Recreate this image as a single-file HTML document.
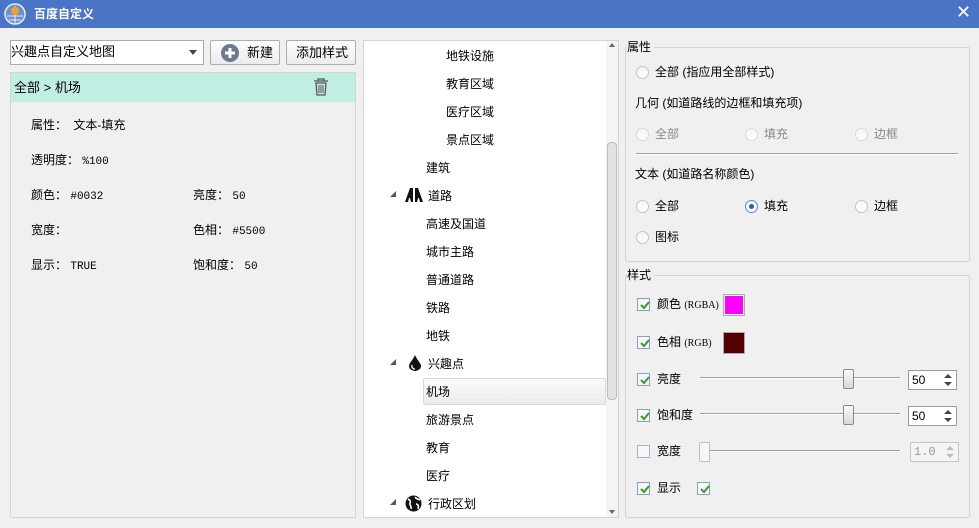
<!DOCTYPE html>
<html><head><meta charset="utf-8"><style>
*{margin:0;padding:0;box-sizing:border-box}
body{width:979px;height:528px;background:#f0f0f0;font-family:"Liberation Sans","Noto Sans CJK SC",sans-serif;font-size:12px;color:#000;position:relative;overflow:hidden}
.a{position:absolute;white-space:nowrap}
.t{line-height:16px}
.mono{font-family:"Liberation Mono","Noto Sans CJK SC",monospace;font-size:11px}
.rad{position:absolute;width:13px;height:13px;border-radius:50%;border:1px solid #c4c4c4;background:linear-gradient(#f4f4f4,#fff)}
.dis{color:#8a8a8a}
.cb{position:absolute;width:13px;height:13px;border:1px solid #8f9fb5;background:#f4f7fb}
.cb svg{position:absolute;left:1px;top:1px}
.grp{position:absolute;border:1px solid #d5d5d5;border-radius:2px}
.spin{position:absolute;width:49px;height:20px;border:1px solid #9a9a9a;background:#fff;font-size:12px;padding:2px 0 0 3px}
.track{position:absolute;height:2px;border-top:1px solid #a0a0a0;border-bottom:1px solid #fff}
.thumb{position:absolute;width:11px;height:20px;border:1px solid #8a8a8a;border-radius:2px;background:linear-gradient(#fafafa,#d8d8d8)}
</style></head><body>
<!-- title bar -->
<div class="a" style="left:0;top:0;width:979px;height:28px;background:#4a74c5"></div>
<svg class="a" style="left:4px;top:3px" width="22" height="22" viewBox="0 0 22 22"><circle cx="11" cy="11" r="10" fill="#6b8fd0" stroke="#e8eef8" stroke-width="1.5"/><path d="M3 13h16M5 17h12M11 3v17" stroke="#e8eef8" stroke-width="1"/><circle cx="11" cy="8" r="4" fill="#f4a21c"/></svg>
<div class="a t" style="left:34px;top:6px;color:#fff;font-size:12px;font-weight:bold">百度自定义</div>
<div class="a" style="left:956px;top:2px;color:#fff;font-size:18px">✕</div>
<!-- combo -->
<div class="a" style="left:10px;top:40px;width:194px;height:25px;background:#fff;border:1px solid #acacac"></div>
<div class="a t" style="left:11px;top:44px;font-size:13px">兴趣点自定义地图</div>
<div class="a" style="left:189px;top:50px;width:0;height:0;border-left:4px solid transparent;border-right:4px solid transparent;border-top:5px solid #444"></div>
<div class="a" style="left:210px;top:40px;width:70px;height:25px;background:linear-gradient(#fdfdfd,#ececec);border:1px solid #adadad;border-radius:2px"></div>
<svg class="a" style="left:220px;top:43px" width="20" height="20"><circle cx="10" cy="10" r="9" fill="#6e7a8e"/><path d="M10 5v10M5 10h10" stroke="#fff" stroke-width="3"/></svg>
<div class="a t" style="left:247px;top:45px;font-size:13px">新建</div>
<div class="a" style="left:286px;top:40px;width:70px;height:25px;background:linear-gradient(#fdfdfd,#ececec);border:1px solid #adadad;border-radius:2px"></div>
<div class="a t" style="left:296px;top:45px;font-size:13px">添加样式</div>
<!-- left panel -->
<div class="a" style="left:10px;top:72px;width:346px;height:446px;border:1px solid #d4d4d4;background:#f0f0f0"></div>
<div class="a" style="left:11px;top:73px;width:344px;height:29px;background:#c1eee2"></div>
<div class="a t" style="left:14px;top:80px;font-size:13px">全部 &gt; 机场</div>
<svg class="a" style="left:313px;top:78px" width="16" height="18" viewBox="0 0 16 18"><path d="M1 3h14M5 3V1h6v2M3 5h10l-1 12H4z" fill="none" stroke="#555" stroke-width="1.3"/><path d="M6 7v8M8 7v8M10 7v8" stroke="#555" stroke-width="1"/></svg>
<div class="a t" style="left:31px;top:117px">属性： <span style="margin-left:3px">文本-填充</span></div>
<div class="a t" style="left:31px;top:152px">透明度： <span class="mono">%100</span></div>
<div class="a t" style="left:31px;top:187px">颜色： <span class="mono">#0032</span></div>
<div class="a t" style="left:193px;top:187px">亮度： <span class="mono">50</span></div>
<div class="a t" style="left:31px;top:222px">宽度：</div>
<div class="a t" style="left:193px;top:222px">色相： <span class="mono">#5500</span></div>
<div class="a t" style="left:31px;top:257px">显示： <span class="mono">TRUE</span></div>
<div class="a t" style="left:193px;top:257px">饱和度： <span class="mono">50</span></div>
<!-- tree -->
<div class="a" style="left:363px;top:40px;width:256px;height:478px;background:#fff;border:1px solid #d4d4d4"></div>
<div class="a" style="left:606px;top:41px;width:12px;height:476px;background:#f4f4f4"></div>
<div class="a" style="left:607px;top:142px;width:10px;height:258px;background:#e2e2e2;border:1px solid #bdbdbd;border-radius:4px"></div>
<div class="a" style="left:609px;top:43px;border-left:3px solid transparent;border-right:3px solid transparent;border-bottom:4px solid #666"></div>
<div class="a" style="left:609px;top:510px;border-left:3px solid transparent;border-right:3px solid transparent;border-top:4px solid #666"></div>
<div class="a" style="left:423px;top:378px;width:183px;height:27px;border:1px solid #d8d8d8;border-radius:2px;background:linear-gradient(#fafafa,#ececec)"></div>
<div class="a t" style="left:446px;top:48px">地铁设施</div>
<div class="a t" style="left:446px;top:76px">教育区域</div>
<div class="a t" style="left:446px;top:104px">医疗区域</div>
<div class="a t" style="left:446px;top:132px">景点区域</div>
<div class="a t" style="left:426px;top:160px">建筑</div>
<div class="a t" style="left:428px;top:188px">道路</div>
<div class="a t" style="left:426px;top:216px">高速及国道</div>
<div class="a t" style="left:426px;top:244px">城市主路</div>
<div class="a t" style="left:426px;top:272px">普通道路</div>
<div class="a t" style="left:426px;top:300px">铁路</div>
<div class="a t" style="left:426px;top:328px">地铁</div>
<div class="a t" style="left:428px;top:356px">兴趣点</div>
<div class="a t" style="left:426px;top:384px">机场</div>
<div class="a t" style="left:426px;top:412px">旅游景点</div>
<div class="a t" style="left:426px;top:440px">教育</div>
<div class="a t" style="left:426px;top:468px">医疗</div>
<div class="a t" style="left:428px;top:496px">行政区划</div>
<svg class="a" style="left:390px;top:190px" width="8" height="8"><path d="M6 1v6H0z" fill="#555"/></svg>
<svg class="a" style="left:390px;top:358px" width="8" height="8"><path d="M6 1v6H0z" fill="#555"/></svg>
<svg class="a" style="left:390px;top:498px" width="8" height="8"><path d="M6 1v6H0z" fill="#555"/></svg>
<svg class="a" style="left:405px;top:188px" width="18" height="14" viewBox="0 0 18 14"><path d="M0 14L5 0h3v14h-2l-1-4H4l-1 4zM18 14L13 0h-3v14h2l1-4h1l1 4z" fill="#111"/></svg>
<svg class="a" style="left:409px;top:355px" width="12" height="16" viewBox="0 0 12 16"><path d="M6 0C4 5 0 8 0 11a6 5 0 0012 0C12 8 8 5 6 0z" fill="#111"/><path d="M3 10a3 3 0 003 4" stroke="#fff" stroke-width="1.3" fill="none"/></svg>
<svg class="a" style="left:405px;top:495px" width="17" height="17" viewBox="0 0 17 17"><circle cx="8.5" cy="8.5" r="8" fill="#111"/><path d="M3 4c2 1 3 2 2 4s2 3 1 6M10 2c1 2 3 2 5 3M11 9c2 0 3 2 2 5" stroke="#fff" stroke-width="1.6" fill="none"/></svg>
<!-- 属性 group -->
<div class="grp" style="left:625px;top:47px;width:345px;height:215px"></div>
<div class="a t" style="left:627px;top:39px;background:#f0f0f0;padding-right:3px">属性</div>
<div class="rad" style="left:636px;top:66px"></div><div class="a t" style="left:655px;top:64px">全部 (指应用全部样式)</div>
<div class="a t" style="left:635px;top:95px">几何 (如道路线的边框和填充项)</div>
<div class="rad" style="left:636px;top:128px;border-color:#d8d8d8"></div><div class="a t dis" style="left:655px;top:126px">全部</div>
<div class="rad" style="left:745px;top:128px;border-color:#d8d8d8"></div><div class="a t dis" style="left:764px;top:126px">填充</div>
<div class="rad" style="left:855px;top:128px;border-color:#d8d8d8"></div><div class="a t dis" style="left:874px;top:126px">边框</div>
<div class="a" style="left:636px;top:153px;width:322px;height:2px;border-top:1px solid #a0a0a0;border-bottom:1px solid #fff"></div>
<div class="a t" style="left:635px;top:166px">文本 (如道路名称颜色)</div>
<div class="rad" style="left:636px;top:200px"></div><div class="a t" style="left:655px;top:198px">全部</div>
<div class="rad" style="left:745px;top:200px;border-color:#5b87c7"></div><div class="a" style="left:749px;top:204px;width:5px;height:5px;border-radius:50%;background:#2a5fa8"></div><div class="a t" style="left:764px;top:198px">填充</div>
<div class="rad" style="left:855px;top:200px"></div><div class="a t" style="left:874px;top:198px">边框</div>
<div class="rad" style="left:636px;top:231px"></div><div class="a t" style="left:655px;top:229px">图标</div>
<!-- 样式 group -->
<div class="grp" style="left:625px;top:275px;width:345px;height:243px"></div>
<div class="a t" style="left:627px;top:267px;background:#f0f0f0;padding-right:3px">样式</div>
<div class="cb" style="left:637px;top:298px"><svg width="11" height="11"><path d="M2 5l3 3 5-6" stroke="#3a9a2a" stroke-width="2" fill="none"/></svg></div>
<div class="a t" style="left:657px;top:296px">颜色 <span style="font-family:'Liberation Serif',serif;font-size:10px">(RGBA)</span></div>
<div class="a" style="left:723px;top:294px;width:22px;height:22px;border:1px solid #aaa;background:#f0f;outline:1px solid #fff;outline-offset:-2px"></div>
<div class="cb" style="left:637px;top:336px"><svg width="11" height="11"><path d="M2 5l3 3 5-6" stroke="#3a9a2a" stroke-width="2" fill="none"/></svg></div>
<div class="a t" style="left:657px;top:334px">色相 <span style="font-family:'Liberation Serif',serif;font-size:10px">(RGB)</span></div>
<div class="a" style="left:723px;top:332px;width:22px;height:22px;border:1px solid #aaa;background:#500"></div>
<div class="cb" style="left:637px;top:373px"><svg width="11" height="11"><path d="M2 5l3 3 5-6" stroke="#3a9a2a" stroke-width="2" fill="none"/></svg></div>
<div class="a t" style="left:657px;top:371px">亮度</div>
<div class="track" style="left:700px;top:377px;width:200px"></div>
<div class="thumb" style="left:843px;top:369px"></div>
<div class="spin" style="left:908px;top:370px">50</div>
<div class="cb" style="left:637px;top:409px"><svg width="11" height="11"><path d="M2 5l3 3 5-6" stroke="#3a9a2a" stroke-width="2" fill="none"/></svg></div>
<div class="a t" style="left:657px;top:407px">饱和度</div>
<div class="track" style="left:700px;top:413px;width:200px"></div>
<div class="thumb" style="left:843px;top:405px"></div>
<div class="spin" style="left:908px;top:406px">50</div>
<div class="cb" style="left:637px;top:445px;border-color:#a9b3c0"></div>
<div class="a t" style="left:657px;top:443px">宽度</div>
<div class="track" style="left:700px;top:450px;width:200px"></div>
<div class="thumb" style="left:699px;top:442px;border-color:#c0c0c0;background:#f6f6f6"></div>
<div class="spin" style="left:910px;top:442px;border-color:#c6c6c6;color:#999;background:#f4f4f4;font-family:'Liberation Mono',monospace">1.0</div>
<div class="cb" style="left:637px;top:482px"><svg width="11" height="11"><path d="M2 5l3 3 5-6" stroke="#3a9a2a" stroke-width="2" fill="none"/></svg></div>
<div class="a t" style="left:657px;top:480px">显示</div>
<div class="cb" style="left:697px;top:482px"><svg width="11" height="11"><path d="M2 5l3 3 5-6" stroke="#3a9a2a" stroke-width="2" fill="none"/></svg></div>
<!-- spinner arrows -->
<svg class="a" style="left:943px;top:372px" width="10" height="16"><path d="M1 6l4-4 4 4zM1 10l4 4 4-4z" fill="#444"/></svg>
<svg class="a" style="left:943px;top:408px" width="10" height="16"><path d="M1 6l4-4 4 4zM1 10l4 4 4-4z" fill="#444"/></svg>
<svg class="a" style="left:945px;top:444px" width="10" height="16"><path d="M1 6l4-4 4 4zM1 10l4 4 4-4z" fill="#bbb"/></svg>
</body></html>
